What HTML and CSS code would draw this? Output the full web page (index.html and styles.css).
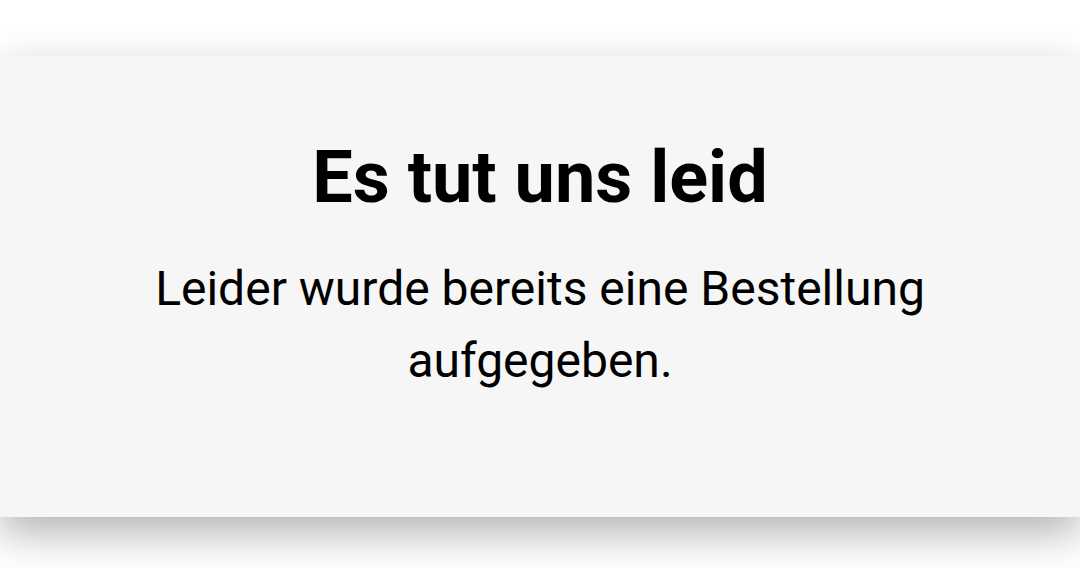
FILE: index.html
```html
<!DOCTYPE html>
<html lang="de">
<head>
<meta charset="utf-8">
<title>Es tut uns leid</title>
<link rel="stylesheet" href="styles.css">
</head>
<body>
  <main class="notice">
    <h1 class="notice-title">Es tut uns leid</h1>
    <p class="notice-text">Leider wurde bereits eine Bestellung aufgegeben.</p>
  </main>
</body>
</html>
```
FILE: styles.css
```css
html, body {
  margin: 0;
  padding: 0;
  background: #ffffff;
  font-family: Roboto, "Noto Sans", sans-serif;
  color: #000;
}

body {
  box-sizing: border-box;
  min-height: 568px;
  padding-top: 56px;
  overflow: hidden;
}

.notice {
  background: #f6f6f6;
  height: 461px;
  box-sizing: border-box;
  padding: 79px 140px 0;
  text-align: center;
  box-shadow: 0 16px 40px rgba(0, 0, 0, 0.3);
}

.notice-title {
  margin: 0;
  font-size: 72px;
  line-height: 86px;
  font-weight: 700;
}

.notice-text {
  margin: 32px 0 0;
  font-size: 48px;
  line-height: 72px;
  font-weight: 400;
}
```
